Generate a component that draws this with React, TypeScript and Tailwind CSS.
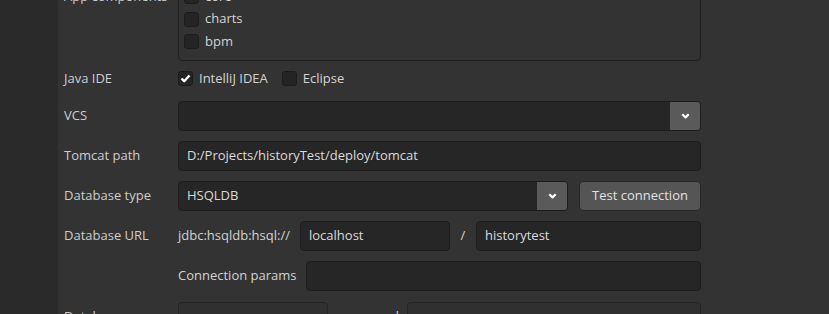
import type { ReactNode } from "react";

const font = { fontFamily: '"Open Sans", "Noto Sans", sans-serif' };

function Box({ checked = false }: { checked?: boolean }) {
  return (
    <span className="flex h-[15px] w-[15px] shrink-0 items-center justify-center rounded-[3px] border border-[#1c1c1c] bg-[#242424]">
      {checked && (
        <svg width="11" height="9" viewBox="0 0 11 9" aria-hidden>
          <polyline points="1.5,4.5 4.2,7.2 9.5,1.5" fill="none" stroke="#ffffff" strokeWidth="2.4" strokeLinejoin="round" />
        </svg>
      )}
    </span>
  );
}

function Check({ label, checked }: { label: string; checked?: boolean }) {
  return (
    <label className="flex items-center gap-[6px]">
      <Box checked={checked} />
      <span>{label}</span>
    </label>
  );
}

function Chevron() {
  return (
    <svg width="9" height="6" viewBox="0 0 9 6" aria-hidden>
      <polyline points="1.3,1.3 4.5,4.4 7.7,1.3" fill="none" stroke="#ffffff" strokeWidth="2.2" strokeLinejoin="round" />
    </svg>
  );
}

function Field({ value, className = "" }: { value?: string; className?: string }) {
  return (
    <div className={"flex h-[30px] items-center rounded-[4px] border border-[#1d1d1d] bg-[#262626] px-[8px] text-[#dadada] " + className}>
      {value}
    </div>
  );
}

function Select({ value, className = "" }: { value?: string; className?: string }) {
  return (
    <div className={"flex h-[30px] overflow-hidden rounded-[4px] border border-[#1d1d1d] bg-[#262626] " + className}>
      <span className="flex flex-1 items-center px-[8px] text-[#dadada]">{value}</span>
      <span className="flex w-[30px] items-center justify-center bg-[#5a5a5a]">
        <Chevron />
      </span>
    </div>
  );
}

function Row({ label, children, className = "" }: { label?: string; children: ReactNode; className?: string }) {
  return (
    <div className={"grid grid-cols-[114px_523px] items-center " + className}>
      <span className="text-[#cdcdcd]">{label}</span>
      <div className="flex items-center">{children}</div>
    </div>
  );
}

export default function App() {
  return (
    <div className="flex h-[314px] w-[829px] overflow-hidden bg-[#333333] text-[13px] text-[#d2d2d2]" style={font}>
      <div className="w-[58px] shrink-0 bg-[#2a2a2a]" />
      <div className="mt-[-23px] flex flex-col pl-[6px]">
        <div className="grid grid-cols-[114px_523px]">
          <span className="pt-[10px] leading-[18px] text-[#cdcdcd]">App components</span>
          <div className="flex h-[84px] flex-col rounded-[4px] border border-[#1f1f1f] px-[5px] py-[7px]">
            <div className="flex h-[23px] items-center"><Check label="core" /></div>
            <div className="flex h-[23px] items-center"><Check label="charts" /></div>
            <div className="flex h-[23px] items-center"><Check label="bpm" /></div>
          </div>
        </div>

        <Row label="Java IDE" className="mt-[8px] h-[26px]">
          <div className="flex items-center gap-[14px]">
            <Check label="IntelliJ IDEA" checked />
            <Check label="Eclipse" />
          </div>
        </Row>

        <Row label="VCS" className="mt-[12px]">
          <Select className="w-full" />
        </Row>

        <Row label="Tomcat path" className="mt-[10px]">
          <Field value="D:/Projects/historyTest/deploy/tomcat" className="w-full" />
        </Row>

        <Row label="Database type" className="mt-[10px]">
          <Select value="HSQLDB" className="w-[390px]" />
          <button className="ml-[11px] h-[30px] flex-1 rounded-[4px] border border-[#262626] bg-[#555555] text-[#e0e0e0]">
            Test connection
          </button>
        </Row>

        <Row label="Database URL" className="mt-[10px]">
          <span className="w-[122px] shrink-0">jdbc:hsqldb:hsql://</span>
          <Field value="localhost" className="w-[150px]" />
          <span className="w-[26px] text-center">/</span>
          <Field value="historytest" className="flex-1" />
        </Row>

        <Row className="mt-[10px]">
          <span className="w-[128px] shrink-0">Connection params</span>
          <Field className="flex-1" />
        </Row>

        <Row label="Database user" className="mt-[11px]">
          <Field className="w-[150px] border-[#242424] bg-[#303030]" />
          <span className="w-[79px] pr-[8px] text-right">password</span>
          <Field className="flex-1 border-[#242424] bg-[#303030]" />
        </Row>
      </div>
    </div>
  );
}
